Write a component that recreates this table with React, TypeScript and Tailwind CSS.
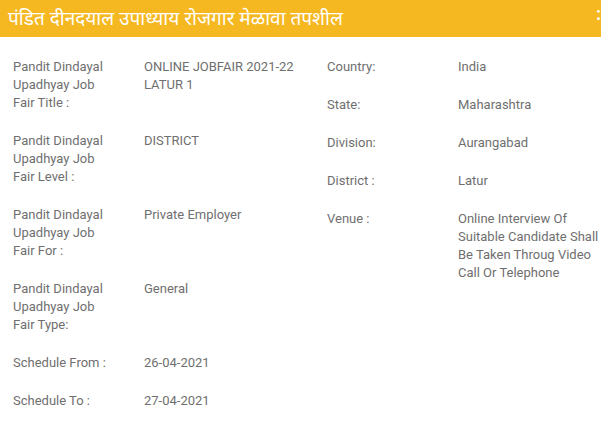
import React from "react";

const left: [string, string][] = [
  ["Pandit Dindayal Upadhyay Job Fair Title :", "ONLINE JOBFAIR 2021-22 LATUR 1"],
  ["Pandit Dindayal Upadhyay Job Fair Level :", "DISTRICT"],
  ["Pandit Dindayal Upadhyay Job Fair For :", "Private Employer"],
  ["Pandit Dindayal Upadhyay Job Fair Type:", "General"],
  ["Schedule From :", "26-04-2021"],
  ["Schedule To :", "27-04-2021"],
];

const right: [string, string][] = [
  ["Country:", "India"],
  ["State:", "Maharashtra"],
  ["Division:", "Aurangabad"],
  ["District :", "Latur"],
  ["Venue :", "Online Interview Of Suitable Candidate Shall Be Taken Throug Video Call Or Telephone"],
];

function Row({ label, value, valueW }: { label: string; value: string; valueW: string }) {
  return (
    <div className="flex mb-[20px]">
      <div className="w-[131px] shrink-0">
        <div className="w-[100px]">{label}</div>
      </div>
      <div className={valueW}>{value}</div>
    </div>
  );
}

export default function App() {
  return (
    <div className="w-[601px] h-[421px] bg-white overflow-hidden" style={{ fontFamily: "Roboto, 'Liberation Sans', sans-serif" }}>
      <div className="h-[37px] bg-[#f6b820] flex items-center justify-between pl-[8px] relative">
        <span className="text-white text-[19px] leading-none" style={{ fontFamily: "'Noto Sans', 'Noto Sans Devanagari', sans-serif" }}>
          पंडित दीनदयाल उपाध्याय रोजगार मेळावा तपशील
        </span>
        <span className="absolute left-[596px] top-[5px] text-white text-[18px] leading-none font-bold">:</span>
      </div>
      <div className="flex pt-[21px] text-[13px] leading-[18px] text-[#6f6f6f]">
        <div className="w-[314px] pl-[13px] shrink-0">
          {left.map(([l, v]) => (
            <Row key={l + v} label={l} value={v} valueW="w-[166px]" />
          ))}
        </div>
        <div className="flex-1 pl-[13px]">
          {right.map(([l, v]) => (
            <Row key={l} label={l} value={v} valueW="w-[143px]" />
          ))}
        </div>
      </div>
    </div>
  );
}
